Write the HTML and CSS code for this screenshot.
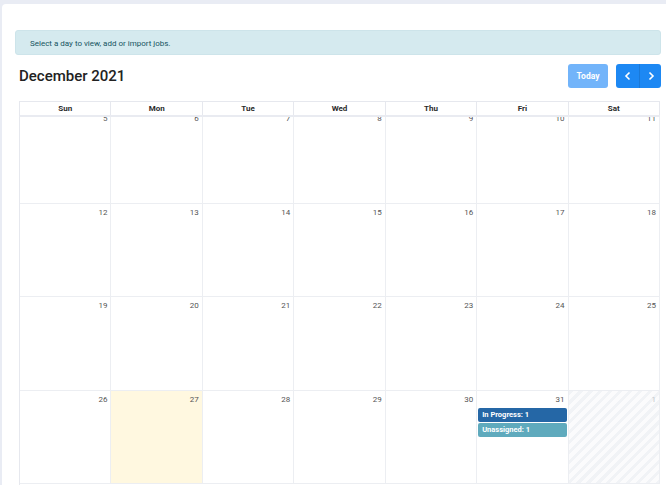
FILE: index.html
```html
<!DOCTYPE html>
<html lang="en">
<head>
    <meta charset="UTF-8">
    <meta name="viewport" content="width=device-width, initial-scale=1.0">
    <title>Job Calendar</title>
    <link rel="stylesheet" href="styles.css">
</head>
<body>
    <div class="card">
        <div class="alert">Select a day to view, add or import jobs.</div>
        <div class="calendar">
            <div class="toolbar">
                <h2 class="title">December 2021</h2>
                <div class="buttons">
                    <button class="btn btn-today">Today</button>
                    <div class="btn-group">
                        <button class="btn btn-nav">
                            <svg width="8" height="10" viewBox="0 0 8 10"><path d="M5.5 1.5 L2 5 L5.5 8.5" fill="none" stroke="#fff" stroke-width="1.6"/></svg>
                        </button>
                        <button class="btn btn-nav">
                            <svg width="8" height="10" viewBox="0 0 8 10"><path d="M2.5 1.5 L6 5 L2.5 8.5" fill="none" stroke="#fff" stroke-width="1.6"/></svg>
                        </button>
                    </div>
                </div>
            </div>
            <div class="grid-head">
                <div>Sun</div><div>Mon</div><div>Tue</div><div>Wed</div><div>Thu</div><div>Fri</div><div>Sat</div>
            </div>
            <div class="scroller">
                <div class="week first">
                    <div class="day"><span class="num">5</span></div>
                    <div class="day"><span class="num">6</span></div>
                    <div class="day"><span class="num">7</span></div>
                    <div class="day"><span class="num">8</span></div>
                    <div class="day"><span class="num">9</span></div>
                    <div class="day"><span class="num">10</span></div>
                    <div class="day"><span class="num">11</span></div>
                </div>
                <div class="week">
                    <div class="day"><span class="num">12</span></div>
                    <div class="day"><span class="num">13</span></div>
                    <div class="day"><span class="num">14</span></div>
                    <div class="day"><span class="num">15</span></div>
                    <div class="day"><span class="num">16</span></div>
                    <div class="day"><span class="num">17</span></div>
                    <div class="day"><span class="num">18</span></div>
                </div>
                <div class="week">
                    <div class="day"><span class="num">19</span></div>
                    <div class="day"><span class="num">20</span></div>
                    <div class="day"><span class="num">21</span></div>
                    <div class="day"><span class="num">22</span></div>
                    <div class="day"><span class="num">23</span></div>
                    <div class="day"><span class="num">24</span></div>
                    <div class="day"><span class="num">25</span></div>
                </div>
                <div class="week">
                    <div class="day"><span class="num">26</span></div>
                    <div class="day today"><span class="num">27</span></div>
                    <div class="day"><span class="num">28</span></div>
                    <div class="day"><span class="num">29</span></div>
                    <div class="day"><span class="num">30</span></div>
                    <div class="day">
                        <span class="num">31</span>
                        <div class="event in-progress">In Progress: 1</div>
                        <div class="event unassigned">Unassigned: 1</div>
                    </div>
                    <div class="day other"><span class="num">1</span></div>
                </div>
            </div>
        </div>
    </div>
</body>
</html>
```

FILE: styles.css
```css
html, body {
    height: 100%;
}
body {
    margin: 0;
    background-color: #e9ecf4;
    font-family: Roboto, "Liberation Sans", Arial, sans-serif;
    overflow: hidden;
}
.card {
    margin: 4px 0 0 2px;
    background-color: #fff;
    border-radius: 4px 0 0 0;
    padding: 26px 5px 0 13px;
    height: 100%;
    box-sizing: border-box;
}
.alert {
    background-color: #d5eaef;
    color: #155461;
    font-size: 8px;
    height: 25px;
    line-height: 25px;
    padding: 0 14px;
    border-radius: 3px;
    border: 1px solid #cde4ea;
    box-sizing: border-box;
}
.calendar {
    padding-left: 4px;
}
.toolbar {
    display: flex;
    justify-content: space-between;
    align-items: center;
    margin-top: 9px;
    height: 24px;
}
.title {
    margin: 0;
    font-size: 15px;
    font-weight: 500;
    color: #222;
}
.buttons {
    display: flex;
    gap: 8px;
}
.btn {
    border: none;
    height: 24px;
    color: #fff;
    font-family: inherit;
    font-size: 8.5px;
    font-weight: 700;
    padding: 0;
    display: flex;
    align-items: center;
    justify-content: center;
}
.btn-today {
    width: 40px;
    background-color: #72b4fa;
    border-radius: 3px;
}
.btn-group {
    display: flex;
    border-radius: 3px;
    overflow: hidden;
}
.btn-nav {
    width: 23px;
    background-color: #1d88f3;
}
.btn-nav + .btn-nav {
    width: 22px;
    border-left: 1px solid #1a79d8;
}
.grid-head {
    display: grid;
    grid-template-columns: repeat(7, 1fr);
    margin-top: 13px;
    margin-right: 1px;
    border: 1px solid #e6e8ee;
    border-right: none;
    border-bottom: 2px solid #e9ebf1;
    font-size: 8px;
    font-weight: 700;
    color: #2b2b2b;
}
.grid-head div {
    height: 13px;
    line-height: 13px;
    text-align: center;
    border-right: 1px solid #e6e8ee;
}
.scroller {
    overflow: hidden;
    margin-right: 1px;
    border-left: 1px solid #e6e8ee;
    height: 368px;
    border-bottom: 1px solid #e6e8ee;
}
.week {
    display: grid;
    grid-template-columns: repeat(7, 1fr);
    height: 93.5px;
    border-bottom: 1px solid #eceef2;
    box-sizing: border-box;
}
.week.first {
    margin-top: -7px;
}
.day {
    border-right: 1px solid #eceef2;
    display: flex;
    flex-direction: column;
    align-items: stretch;
    padding: 3px 1px 0 1px;
}
.num {
    text-align: right;
    font-size: 8px;
    color: #555;
    padding-right: 2px;
    height: 12px;
    line-height: 12px;
    margin-bottom: 2px;
}
.today {
    background-color: #fff8e0;
}
.other {
    background: repeating-linear-gradient(135deg, #f1f3f6 0 3px, #fbfbfc 3px 7px);
}
.other .num {
    color: #c4c7cc;
}
.event {
    height: 14px;
    line-height: 14px;
    border-radius: 2px;
    color: #fff;
    font-size: 7.5px;
    font-weight: 700;
    padding-left: 4px;
    margin-bottom: 1px;
}
.in-progress {
    background-color: #2567a6;
}
.unassigned {
    background-color: #5faabd;
}
```
